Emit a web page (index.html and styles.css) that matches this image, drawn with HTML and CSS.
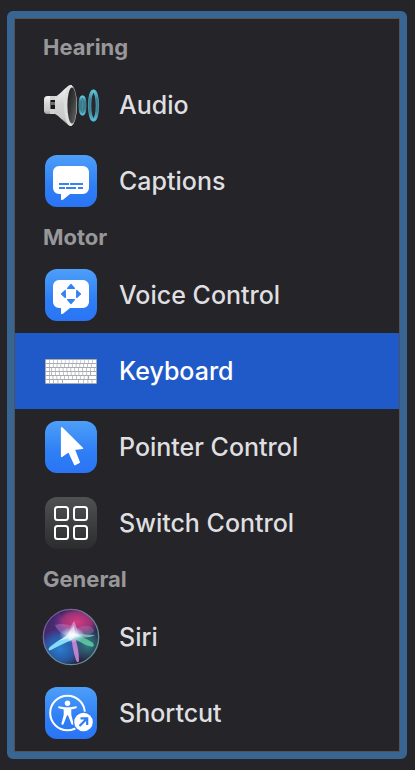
FILE: index.html
```
<!DOCTYPE html>
<html lang="en">
<head>
    <meta charset="UTF-8">
    <meta name="viewport" content="width=device-width, initial-scale=1.0">
    <title>Accessibility</title>
    <link rel="stylesheet" href="styles.css">
</head>
<body>
    <!-- shared gradients -->
    <svg class="defs" width="0" height="0" aria-hidden="true">
        <defs>
            <linearGradient id="blue" x1="0" y1="0" x2="0" y2="1">
                <stop offset="0" stop-color="#4d9ff8"/>
                <stop offset="0.6" stop-color="#2f7ef6"/>
                <stop offset="1" stop-color="#2a74f4"/>
            </linearGradient>
            <linearGradient id="gray" x1="0" y1="0" x2="0" y2="1">
                <stop offset="0" stop-color="#505153"/>
                <stop offset="1" stop-color="#2b2c2d"/>
            </linearGradient>
        </defs>
    </svg>
    <nav class="sidebar" aria-label="Accessibility features">
        <h2>Hearing</h2>
        <ul>
            <li>
                <a href="#audio">
                    <svg class="icon" viewBox="0 0 60 60" aria-hidden="true">
                        <defs>
                            <linearGradient id="cone" x1="0" y1="0" x2="0" y2="1">
                                <stop offset="0" stop-color="#f4f4f4"/>
                                <stop offset="0.45" stop-color="#d4d4d4"/>
                                <stop offset="0.8" stop-color="#c9c9c9"/>
                                <stop offset="1" stop-color="#a0a0a0"/>
                            </linearGradient>
                            <linearGradient id="hole" x1="0" y1="0" x2="1" y2="1">
                                <stop offset="0" stop-color="#1b1b1b"/>
                                <stop offset="0.5" stop-color="#3a3a3a"/>
                                <stop offset="1" stop-color="#6c6c6c"/>
                            </linearGradient>
                            <linearGradient id="wave" x1="0" y1="0" x2="0" y2="1">
                                <stop offset="0" stop-color="#62c7de"/>
                                <stop offset="0.3" stop-color="#387f91"/>
                                <stop offset="0.7" stop-color="#387f91"/>
                                <stop offset="1" stop-color="#58bfd8"/>
                            </linearGradient>
                        </defs>
                        <rect x="3" y="21" width="9" height="18" rx="3.5" fill="url(#cone)"/>
                        <path d="M9 21h6v4H9zM9 34h6v5H9z" fill="#d2d2d2"/>
                        <path d="M9 25h5v9H9z" fill="#6b6b6c"/>
                        <path d="M10 25h4v2h-4zM10 30h4v4h-4z" fill="#171717"/>
                        <path d="M14 22c4-2 8-7 12-10 2-2 4-2 5-2v41c-2 0-4-1-6-3-4-3-7-7-11-9z" fill="url(#cone)"/>
                        <ellipse cx="29.5" cy="30.5" rx="6.5" ry="20.5" fill="#dedede"/>
                        <ellipse cx="31" cy="30.5" rx="4.6" ry="18" fill="url(#hole)"/>
                        <ellipse cx="41.5" cy="30.5" rx="2.8" ry="9" fill="#2d6270" stroke="url(#wave)" stroke-width="2.4"/>
                        <ellipse cx="41.5" cy="30.5" rx="1.2" ry="7" fill="#498b9b"/>
                        <ellipse cx="52.5" cy="30.5" rx="4" ry="14.5" fill="#26292f" stroke="url(#wave)" stroke-width="3.2"/>
                        <ellipse cx="52.5" cy="30.5" rx="5" ry="15.6" fill="none" stroke="#57abc0" stroke-width="0.5"/>
                        <ellipse cx="52.5" cy="30.5" rx="2.6" ry="12.6" fill="none" stroke="#57abc0" stroke-width="0.5"/>
                    </svg>
                    <span>Audio</span>
                </a>
            </li>
            <li>
                <a href="#captions">
                    <svg class="icon" viewBox="0 0 60 60" aria-hidden="true">
                        <rect x="4" y="4" width="52" height="52" rx="12" fill="url(#blue)"/>
                        <path d="M18 15h24a6 6 0 0 1 6 6v16a6 6 0 0 1-6 6H29l-7 5.800q-2 1.200-2-1V43h-2a6 6 0 0 1-6-6V21a6 6 0 0 1 6-6z" fill="#fff"/>
                        <path d="M18 33h10M29 33h13M18 37h6M25 37h10M37 37h5" stroke="#3584f5" stroke-width="2"/>
                    </svg>
                    <span>Captions</span>
                </a>
            </li>
        </ul>
        <h2>Motor</h2>
        <ul>
            <li>
                <a href="#voice-control">
                    <svg class="icon" viewBox="0 0 60 60" aria-hidden="true">
                        <rect x="4" y="4" width="52" height="52" rx="12" fill="url(#blue)"/>
                        <path d="M18 15h24a6 6 0 0 1 6 6v16a6 6 0 0 1-6 6H29l-7 5.800q-2 1.200-2-1V43h-2a6 6 0 0 1-6-6V21a6 6 0 0 1 6-6z" fill="#fff"/>
                        <path d="M30 19.500l3.500 3.800h-7zM30 38.500l3.500-3.800h-7zM20.500 29l3.800-3.500v7zM39.500 29l-3.800-3.500v7z" fill="#3382f5" stroke="#3382f5" stroke-width="1.2" stroke-linejoin="round"/>
                    </svg>
                    <span>Voice Control</span>
                </a>
            </li>
            <li>
                <a href="#keyboard" class="selected" aria-current="page">
                    <svg class="icon" viewBox="0 0 60 60" aria-hidden="true">
                        <rect x="4" y="18" width="52" height="25" rx="1" fill="#a9abae"/>
                        <g fill="none" stroke="#fff" stroke-width="3.2">
                            <path d="M5 20.500h50" stroke-dasharray="3.3 0.6"/>
                            <path d="M5 24.500h46" stroke-dasharray="3.1 0.7"/>
                            <path d="M5 28.500h5M10.700 28.500H55" stroke-dasharray="3.2 0.7"/>
                            <path d="M5 32.500h5.200M11 32.500h38" stroke-dasharray="3.2 0.7"/>
                            <path d="M5 36.500h6.500M12.300 36.500h35" stroke-dasharray="3.2 0.7"/>
                            <path d="M51 24.500h4M50 32.500h5M48 36.500h7"/>
                            <path d="M5 40.500h3.200M9 40.500h3.200M13 40.500h3.500M17.300 40.500H21M22 40.500h15M37.800 40.500h4.500M43 40.500h3.500M47.300 40.500h3.300M51.400 40.500H55"/>
                        </g>
                    </svg>
                    <span>Keyboard</span>
                </a>
            </li>
            <li>
                <a href="#pointer-control">
                    <svg class="icon" viewBox="0 0 60 60" aria-hidden="true">
                        <rect x="4" y="4" width="52" height="52" rx="12" fill="url(#blue)"/>
                        <path d="M20.700 10.800l20.700 20.400-8.400.9 5.200 13.300-4.300 2.200-6.100-13.200-7.100 5z" fill="#fff" stroke="#fff" stroke-width="1.6" stroke-linejoin="round"/>
                    </svg>
                    <span>Pointer Control</span>
                </a>
            </li>
            <li>
                <a href="#switch-control">
                    <svg class="icon" viewBox="0 0 60 60" aria-hidden="true">
                        <rect x="4" y="4" width="52" height="52" rx="12" fill="url(#gray)"/>
                        <g fill="none" stroke="#fff" stroke-width="2">
                            <rect x="14" y="14" width="13" height="13" rx="2.5"/>
                            <rect x="33" y="14" width="13" height="13" rx="2.5"/>
                            <rect x="14" y="33" width="13" height="13" rx="2.5"/>
                            <rect x="33" y="33" width="13" height="13" rx="2.5"/>
                        </g>
                    </svg>
                    <span>Switch Control</span>
                </a>
            </li>
        </ul>
        <h2>General</h2>
        <ul>
            <li>
                <a href="#siri">
                    <svg class="icon" viewBox="0 0 60 60" aria-hidden="true">
                        <defs>
                            <radialGradient id="orb">
                                <stop offset="0" stop-color="#403a75"/>
                                <stop offset="0.85" stop-color="#28284b"/>
                                <stop offset="1" stop-color="#20242f"/>
                            </radialGradient>
                            <radialGradient id="pink">
                                <stop offset="0" stop-color="#d83a7c"/>
                                <stop offset="0.6" stop-color="#b23582" stop-opacity="0.8"/>
                                <stop offset="1" stop-color="#70309a" stop-opacity="0"/>
                            </radialGradient>
                            <radialGradient id="deep">
                                <stop offset="0" stop-color="#2b7fd4"/>
                                <stop offset="0.6" stop-color="#2764b4" stop-opacity="0.8"/>
                                <stop offset="1" stop-color="#2764b4" stop-opacity="0"/>
                            </radialGradient>
                            <radialGradient id="teal">
                                <stop offset="0" stop-color="#2e8580"/>
                                <stop offset="1" stop-color="#2e7580" stop-opacity="0"/>
                            </radialGradient>
                            <radialGradient id="glow">
                                <stop offset="0" stop-color="#fff"/>
                                <stop offset="0.35" stop-color="#e4f4ff" stop-opacity="0.8"/>
                                <stop offset="1" stop-color="#a9d8ff" stop-opacity="0"/>
                            </radialGradient>
                            <linearGradient id="rim" x1="0" y1="0" x2="1" y2="1">
                                <stop offset="0" stop-color="#75439f"/>
                                <stop offset="0.5" stop-color="#6a8899"/>
                                <stop offset="1" stop-color="#68939b"/>
                            </linearGradient>
                            <clipPath id="ball"><circle cx="30" cy="30" r="28"/></clipPath>
                        </defs>
                        <circle cx="30" cy="30" r="28" fill="url(#orb)"/>
                        <g clip-path="url(#ball)">
                            <ellipse cx="7" cy="20" rx="16" ry="20" fill="#612b92" opacity="0.5"/>
                            <ellipse cx="36" cy="15" rx="24" ry="16" fill="url(#pink)"/>
                            <ellipse cx="19" cy="42" rx="23" ry="20" fill="url(#deep)"/>
                            <ellipse cx="47" cy="37" rx="16" ry="18" fill="url(#teal)"/>
                        </g>
                        <path d="M14 18c10-3 21 1 31 11-10-2-21 1-26-4-2-2-4-4-5-7z" fill="#c49ae0" opacity="0.35"/>
                        <path d="M33 14c2 4 3 10 5 13 6 2 12 1 15-3 0-4-5-5-8-5-9 0-15 5-18 11z" fill="#b07ec0" opacity="0.35"/>
                        <path d="M33 14c-3 4-5 10-7 16l12-1c-1-5-3-11-5-15z" fill="#d8a5df" opacity="0.6"/>
                        <path d="M31 27c-9 3-18 9-23 14-1 2 0 3 2 2 7-4 17-8 24-12z" fill="#91e8ff" opacity="0.9"/>
                        <path d="M30 27c1 9 2 18 5 26 1 3 3 3 3 0 0-8-2-17-5-26z" fill="#d98ad8" opacity="0.85"/>
                        <path d="M32 27c7 1 14 5 20 9 2 3 0 5-4 3-7-2-11-6-17-8z" fill="#63d3a9" opacity="0.8"/>
                        <path d="M34 26c6 1 14 2 20 2-4 3-14 3-22 2z" fill="#98d4c9" opacity="0.7"/>
                        <ellipse cx="31" cy="28" rx="13" ry="8" fill="url(#glow)"/>
                        <path d="M33 18l1 8 7 3-8 1-3 4-3-3-9 3 9-7z" fill="#fff" opacity="0.5"/>
                        <circle cx="30" cy="30" r="27.700" fill="none" stroke="url(#rim)" stroke-width="1.3"/>
                    </svg>
                    <span>Siri</span>
                </a>
            </li>
            <li>
                <a href="#shortcut">
                    <svg class="icon" viewBox="0 0 60 60" aria-hidden="true">
                        <rect x="4" y="4" width="52" height="52" rx="12" fill="url(#blue)"/>
                        <circle cx="26.5" cy="30" r="17.300" fill="none" stroke="#fff" stroke-width="2"/>
                        <circle cx="26.5" cy="20.200" r="2.700" fill="#fff"/>
                        <path d="M17.500 23.300l6.500 1h5l6.500-1q1 1.200-.2 2l-5 1.200v5.500l2.400 9q-1.200 1.600-2.200.2l-3.500-9h-1l-3.500 9q-1.200 1.200-2.200-.2l2.400-9v-5.500l-5-1.200q-1.200-.8-.2-2z" fill="#fff"/>
                        <circle cx="42.5" cy="39" r="10.500" fill="#2f7ef6"/>
                        <circle cx="42.5" cy="39" r="9.300" fill="#fff"/>
                        <path d="M38.500 43l7-7M39.500 35.300h6.700V42" fill="none" stroke="#2f7cf5" stroke-width="2.2"/>
                    </svg>
                    <span>Shortcut</span>
                </a>
            </li>
        </ul>
    </nav>
</body>
</html>
```
FILE: styles.css
```
* {
    box-sizing: border-box;
}
body {
    margin: 0;
    padding: 11px 8px 11px 7px;
    background-color: #252428;
    font-family: Inter, "Liberation Sans", sans-serif;
    color: #dfdfe0;
}
.defs {
    position: absolute;
}
.sidebar {
    padding-top: 11px;
    border: 7px solid #386592;
    border-radius: 6px;
    box-shadow: inset 0 0 0 1px #515256;
}
h2 {
    margin: 0;
    padding: 0 0 2px 29px;
    font-size: 22px;
    font-weight: 700;
    line-height: 36px;
    color: #98979a;
}
ul {
    margin: 0;
    padding: 0 1px;
    list-style: none;
}
.sidebar ul:last-child {
    padding-bottom: 1px;
}
a {
    display: flex;
    align-items: center;
    gap: 18px;
    height: 76px;
    padding-left: 26px;
    font-size: 25px;
    font-weight: 500;
    color: inherit;
    text-decoration: none;
}
.selected {
    background-color: #1f5ac8;
    color: #ffffff;
}
.icon {
    width: 60px;
    height: 60px;
    flex-shrink: 0;
}
```
